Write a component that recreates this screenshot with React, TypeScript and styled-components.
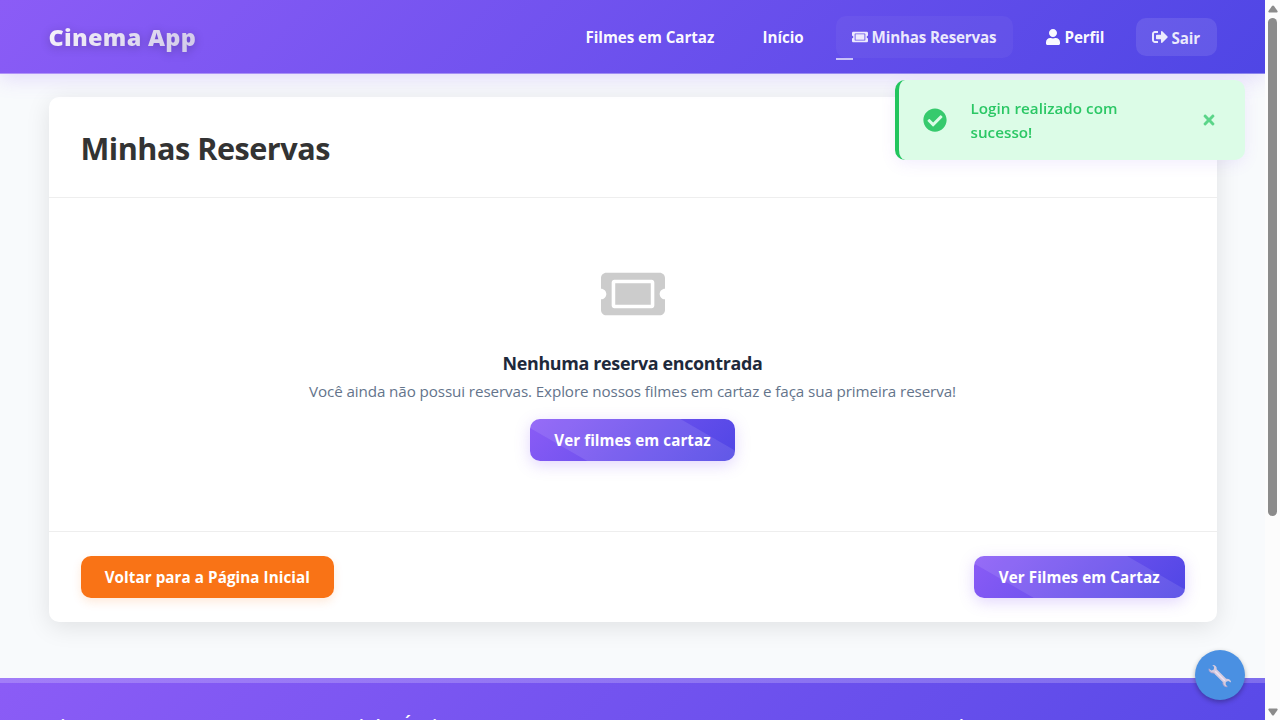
import React from "react";
import styled, { createGlobalStyle } from "styled-components";
import { FaTicketAlt, FaUser, FaSignOutAlt, FaCheckCircle, FaTimes } from "react-icons/fa";

const GlobalStyle = createGlobalStyle`
  * { box-sizing: border-box; }
  body {
    margin: 0;
    overflow: hidden;
    background: #f8fafc;
    font-family: "Segoe UI", "Open Sans", "Noto Sans", sans-serif;
    color: #1e293b;
  }
  h1, h2, h3, p { margin: 0; }
  button { font-family: inherit; border: 0; cursor: pointer; }
`;

const Viewport = styled.div`
  display: flex;
  width: 1280px;
  height: 720px;
  overflow: hidden;
`;

const Page = styled.div`
  display: flex;
  flex-direction: column;
  width: 1265px;
  height: 720px;
  overflow: hidden;
`;

const Header = styled.header`
  position: relative;
  z-index: 2;
  flex: none;
  height: 74px;
  background: linear-gradient(135deg, #8b5cf6, #4f46e5);
  background-origin: border-box;
  border-bottom: 1px solid rgba(255, 255, 255, 0.35);
  box-shadow: 0 4px 20px rgba(139, 92, 246, 0.2);
`;

const HeaderInner = styled.div`
  display: flex;
  align-items: center;
  justify-content: space-between;
  width: 1168px;
  height: 73.3px;
  margin: 0 auto;
`;

const Brand = styled.div`
  font-size: 23.5px;
  line-height: 36px;
  padding-top: 1px;
  font-weight: 800;
  letter-spacing: 0.3px;
  background: linear-gradient(135deg, #f8f5fb, #cfc8e8);
  background-clip: text;
  -webkit-background-clip: text;
  color: transparent;
  filter: drop-shadow(0 2px 5px rgba(0, 0, 0, 0.22));
`;

const Nav = styled.nav`
  display: flex;
  align-items: center;
  gap: 16px;
`;

const NavLink = styled.a<{ $active?: boolean; $w: number; $track?: number }>`
  position: relative;
  display: flex;
  align-items: center;
  gap: 4px;
  width: ${(p) => p.$w}px;
  height: 42px;
  padding: 0 16px;
  border-radius: 10px;
  white-space: nowrap;
  font-size: 15.2px;
  font-weight: 700;
  letter-spacing: ${(p) => p.$track ?? 0}px;
  color: ${(p) => (p.$active ? "rgba(255,255,255,.88)" : "rgba(255,255,255,.97)")};
  background: ${(p) => (p.$active ? "rgba(255,255,255,.045)" : "transparent")};
  svg { flex: none; }
  &::after {
    content: "";
    display: ${(p) => (p.$active ? "block" : "none")};
    position: absolute;
    left: 0;
    bottom: -2.5px;
    width: 17.5px;
    height: 2.5px;
    background: rgba(255, 255, 255, 0.65);
  }
`;

const LogoutButton = styled.button`
  display: flex;
  align-items: center;
  gap: 4px;
  width: 81px;
  height: 37.5px;
  margin-top: 1px;
  padding: 1px 15px 0 16px;
  border-radius: 10px;
  font-size: 15.2px;
  font-weight: 700;
  letter-spacing: -0.1px;
  color: rgba(255, 255, 255, 0.88);
  background: rgba(255, 255, 255, 0.1);
  svg { flex: none; margin-top: -2px; }
`;

const Main = styled.main`
  flex: none;
  height: 603.7px;
  padding-top: 23.3px;
`;

const Card = styled.section`
  width: 1168px;
  height: 524.3px;
  margin: 0 auto;
  border-radius: 10px;
  background: #fff;
  box-shadow: 0 5px 25px rgba(0, 0, 0, 0.1);
`;

const CardHeader = styled.div`
  display: flex;
  align-items: center;
  height: 100.6px;
  padding: 2px 32px 0;
  border-bottom: 1px solid #eee;
`;

const Title = styled.h1`
  font-size: 30.6px;
  font-weight: 700;
  letter-spacing: -0.48px;
  color: #333;
`;

const EmptyState = styled.div`
  display: flex;
  flex-direction: column;
  align-items: center;
  height: 333px;
  padding-top: 64px;
`;

const EmptyTitle = styled.h3`
  margin-top: 23.5px;
  line-height: 28px;
  font-size: 17.9px;
  font-weight: 700;
  letter-spacing: -0.33px;
  color: #1e293b;
`;

const EmptyText = styled.p`
  line-height: 24px;
  margin-top: 2px;
  font-size: 15.2px;
  letter-spacing: -0.1px;
  color: #64748b;
`;

const Button = styled.button<{ $w: number; $accent?: boolean }>`
  position: relative;
  overflow: hidden;
  width: ${(p) => p.$w}px;
  height: 41.6px;
  padding: 1px 0 0;
  border-radius: 10px;
  font-size: 15.2px;
  font-weight: 700;
  letter-spacing: 0.07px;
  color: #fff;
  background: ${(p) => (p.$accent ? "#f97316" : "linear-gradient(135deg, #8b5cf6, #4f46e5)")};
  box-shadow: ${(p) => (p.$accent ? "0 4px 10px rgba(249,115,22,.15)" : "0 4px 15px rgba(139,92,246,.25)")};
  &::after {
    content: "";
    display: ${(p) => (p.$accent ? "none" : "block")};
    position: absolute;
    top: -50%;
    left: -50%;
    width: 200%;
    height: 200%;
    background: rgba(255, 255, 255, 0.1);
    transform: rotate(30deg);
  }
`;

const EmptyAction = styled.div`
  margin-top: 15.6px;
`;

const CardFooter = styled.div`
  display: flex;
  justify-content: space-between;
  height: 90px;
  padding: 24.2px 32px;
  border-top: 1px solid #eee;
`;

const Footer = styled.footer`
  flex: none;
  height: 300px;
  border-top: 5.5px solid #9d7bf5;
  border-image: linear-gradient(90deg, #a27df8, #7e6ded) 1;
  background: linear-gradient(135deg, #8b5cf6, #4f46e5);
`;

const FooterGrid = styled.div`
  display: grid;
  grid-template-columns: repeat(4, 1fr);
  gap: 32px;
  width: 1168px;
  margin: 0 auto;
  padding-top: 30px;
`;

const FooterTitle = styled.h3`
  font-size: 19px;
  line-height: 28px;
  font-weight: 600;
  letter-spacing: -0.2px;
  color: #fff;
`;

const Toast = styled.div`
  position: fixed;
  z-index: 5;
  top: 80px;
  left: 895px;
  display: flex;
  align-items: center;
  width: 350px;
  height: 80px;
  padding: 0 28px 0 24px;
  border-left: 4px solid #22c55e;
  border-radius: 10px;
  background: #dcfce7;
  box-shadow: 0 4px 15px rgba(139, 92, 246, 0.1);
  color: #2bc765;
`;

const ToastText = styled.p`
  flex: 1;
  margin-left: 23.5px;
  font-size: 15.2px;
  line-height: 24px;
  font-weight: 600;
  letter-spacing: 0.03px;
`;

const ToastClose = styled.button`
  display: flex;
  padding: 0;
  color: #5bd589;
  background: none;
`;

const ToolButton = styled.button`
  position: fixed;
  z-index: 5;
  left: 1195px;
  top: 650.4px;
  display: flex;
  align-items: center;
  justify-content: center;
  width: 50px;
  height: 50px;
  padding: 1px 0 0;
  border-radius: 50%;
  background: #4a90e2;
  box-shadow: 0 2px 5px rgba(0, 0, 0, 0.3);
`;

const Scrollbar = styled.div`
  display: flex;
  flex-direction: column;
  align-items: center;
  justify-content: space-between;
  width: 15px;
  height: 720px;
  padding: 5px 0 4px;
  background: #fcfcfc;
`;

const Thumb = styled.div`
  width: 9px;
  height: 498px;
  margin-bottom: auto;
  margin-top: 5px;
  border-radius: 5px;
  background: #8b8b8b;
`;

const Arrow = ({ down }: { down?: boolean }) => (
  <svg width="10" height="8" viewBox="0 0 10 8">
    <path
      d={down ? "M1 0.5h8q1 .5.5 1.5L6 7q-1 1-2 0L.5 2Q0 1 1 .5z" : "M1 7.5h8q1-.5.5-1.5L6 1Q5 0 4 1L.5 6Q0 7 1 7.5z"}
      fill="#8b8b8b"
    />
  </svg>
);

const Wrench = () => (
  <svg width="24" height="24" viewBox="0 0 24 24">
    <path
      d="M4.3 1.1c2.7-.4 4.8 1.6 4.4 4.2l9.5 9.4c2.7-.3 4.9 1.3 4.9 3.9l-2.9-1.7-2.3 1.2-.3 2.2 1.8 2.5c-3 .1-4.8-2-4.4-4.5L5.6 8.9C3 9.3.8 7.4 1 4.7l2.5 1.9 2.3-1.2.3-2.3z"
      fill="#d5cbdf"
    />
    <path d="M7.2 7.2l9.6 9.5" stroke="#eee2f3" strokeWidth="1.4" />
    <path d="M1 4.7C.8 7.4 3 9.3 5.6 8.9l1 1M15 18.3c-.4 2.5 1.4 4.6 4.4 4.5" stroke="#b5a4cb" strokeWidth="1" fill="none" />
  </svg>
);

export default function App() {
  return (
    <Viewport>
      <GlobalStyle />
      <Page>
        <Header>
          <HeaderInner>
            <Brand>Cinema App</Brand>
            <Nav>
              <NavLink $w={161} $track={-0.06}>Filmes em Cartaz</NavLink>
              <NavLink $w={73} $track={-0.05}>Início</NavLink>
              <NavLink $w={177} $track={-0.16} $active>
                <FaTicketAlt size={16} />
                Minhas Reservas
              </NavLink>
              <NavLink $w={91} $track={-0.15}>
                <FaUser size={16} />
                Perfil
              </NavLink>
              <LogoutButton>
                <FaSignOutAlt size={16} />
                Sair
              </LogoutButton>
            </Nav>
          </HeaderInner>
        </Header>
        <Main>
          <Card>
            <CardHeader>
              <Title>Minhas Reservas</Title>
            </CardHeader>
            <EmptyState>
              <FaTicketAlt size={64} color="#ccc" />
              <EmptyTitle>Nenhuma reserva encontrada</EmptyTitle>
              <EmptyText>
                Você ainda não possui reservas. Explore nossos filmes em cartaz e faça sua primeira reserva!
              </EmptyText>
              <EmptyAction>
                <Button $w={205}>Ver filmes em cartaz</Button>
              </EmptyAction>
            </EmptyState>
            <CardFooter>
              <Button $w={253.6} $accent>Voltar para a Página Inicial</Button>
              <Button $w={210.6}>Ver Filmes em Cartaz</Button>
            </CardFooter>
          </Card>
        </Main>
        <Footer>
          <FooterGrid>
            <FooterTitle>Cinema App</FooterTitle>
            <FooterTitle>Links Úteis</FooterTitle>
            <FooterTitle>Contato</FooterTitle>
            <FooterTitle>Siga-nos</FooterTitle>
          </FooterGrid>
        </Footer>
      </Page>
      <Scrollbar>
        <Arrow />
        <Thumb />
        <Arrow down />
      </Scrollbar>
      <Toast>
        <FaCheckCircle size={24} color="#36ca6d" />
        <ToastText>
          Login realizado com
          <br />
          sucesso!
        </ToastText>
        <ToastClose>
          <FaTimes size={16} />
        </ToastClose>
      </Toast>
      <ToolButton>
        <Wrench />
      </ToolButton>
    </Viewport>
  );
}
